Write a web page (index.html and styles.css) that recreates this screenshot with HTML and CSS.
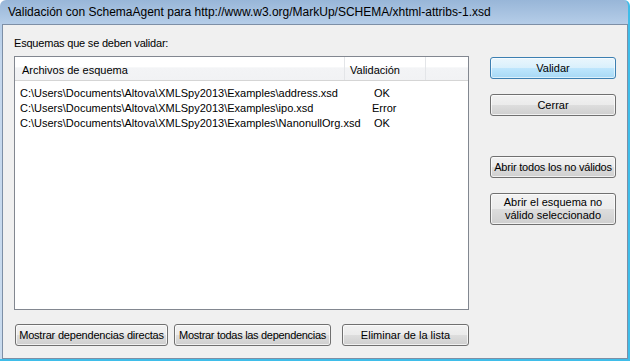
FILE: index.html
```html
<!DOCTYPE html>
<html lang="es">
<head>
    <meta charset="UTF-8">
    <title>Validación con SchemaAgent</title>
    <link rel="stylesheet" href="styles.css">
</head>
<body>
    <div class="window">
        <div class="titlebar">Validación con SchemaAgent para http://www.w3.org/MarkUp/SCHEMA/xhtml-attribs-1.xsd</div>
        <div class="client">
            <div class="left-col">
                <div class="label">Esquemas que se deben validar:</div>
                <div class="listbox">
                    <div class="list-header">
                        <div class="col col-file">Archivos de esquema</div>
                        <div class="col col-valid">Validación</div>
                        <div class="col col-rest"></div>
                    </div>
                    <div class="list-body">
                        <div class="row">
                            <span class="cell-file">C:\Users\Documents\Altova\XMLSpy2013\Examples\address.xsd</span>
                            <span class="cell-valid ok">OK</span>
                        </div>
                        <div class="row">
                            <span class="cell-file">C:\Users\Documents\Altova\XMLSpy2013\Examples\ipo.xsd</span>
                            <span class="cell-valid">Error</span>
                        </div>
                        <div class="row">
                            <span class="cell-file">C:\Users\Documents\Altova\XMLSpy2013\Examples\NanonullOrg.xsd</span>
                            <span class="cell-valid ok">OK</span>
                        </div>
                    </div>
                </div>
                <div class="bottom-buttons">
                    <button class="btn btn-direct">Mostrar dependencias directas</button>
                    <button class="btn btn-all">Mostrar todas las dependencias</button>
                    <button class="btn btn-remove">Eliminar de la lista</button>
                </div>
            </div>
            <div class="right-col">
                <button class="btn btn-side default">Validar</button>
                <button class="btn btn-side btn-close">Cerrar</button>
                <button class="btn btn-side btn-open-all">Abrir todos los no válidos</button>
                <button class="btn btn-side btn-tall">Abrir el esquema no<br>válido seleccionado</button>
            </div>
        </div>
    </div>
</body>
</html>
```

FILE: styles.css
```css
html, body {
    margin: 0;
    padding: 0;
    background: #ffffff;
}
body {
    font-family: "Liberation Sans", Arial, sans-serif;
    font-size: 11px;
    color: #000;
}
.window {
    width: 630px;
    height: 361px;
    box-sizing: border-box;
    display: flex;
    flex-direction: column;
    background: linear-gradient(to bottom, #98b6d8 0px, #b5cde8 24px, #c4d7ed 60px, #c9dbee 100%);
    border-radius: 6px 6px 0 0;
    border-right: 2px solid #3fbde9;
    border-bottom: 2px solid #3fbde9;
}
.titlebar {
    height: 24px;
    line-height: 24px;
    padding-left: 8px;
    font-size: 12px;
    color: #000;
    white-space: nowrap;
    overflow: hidden;
}
.client {
    flex: 1;
    margin: 0 0 0 2px;
    border: 1px solid #7d8fa6;
    background: #f0f0f0;
    display: flex;
    padding: 11px 10px 10px 11px;
}
.left-col {
    width: 455px;
    display: flex;
    flex-direction: column;
}
.label {
    height: 14px;
    line-height: 14px;
    margin-bottom: 6px;
    letter-spacing: -0.2px;
}
.listbox {
    height: 254px;
    box-sizing: border-box;
    border: 1px solid #828790;
    background: #fff;
}
.list-header {
    display: flex;
    height: 23px;
    border-bottom: 1px solid #d5d5d5;
    background: linear-gradient(to bottom, #ffffff 0%, #ffffff 45%, #f3f4f6 46%, #f1f2f4 100%);
}
.col {
    line-height: 26px;
    box-sizing: border-box;
}
.col-file {
    width: 330px;
    padding-left: 7px;
    border-right: 1px solid #e3e5e8;
}
.col-valid {
    width: 81px;
    padding-left: 5px;
    border-right: 1px solid #e3e5e8;
}
.col-rest {
    flex: 1;
}
.list-body {
    padding-top: 5px;
}
.row {
    display: flex;
    height: 15px;
    line-height: 15px;
}
.cell-file {
    width: 330px;
    padding-left: 5px;
    box-sizing: border-box;
    white-space: nowrap;
}
.cell-valid {
    padding-left: 27px;
}
.cell-valid.ok {
    padding-left: 29px;
}
.bottom-buttons {
    display: flex;
    margin-top: 14px;
    padding-left: 1px;
}
.btn {
    font-family: "Liberation Sans", Arial, sans-serif;
    font-size: 11px;
    color: #000;
    height: 22px;
    padding: 0;
    box-sizing: border-box;
    white-space: nowrap;
    border: 1px solid #707070;
    border-radius: 3px;
    background: linear-gradient(to bottom, #f2f2f2 0%, #ebebeb 50%, #dddddd 51%, #cfcfcf 100%);
    box-shadow: inset 0 0 0 1px rgba(255, 255, 255, 0.7);
    line-height: 14px;
}
.btn-direct {
    width: 153px;
    letter-spacing: -0.2px;
}
.btn-all {
    width: 157px;
    margin-left: 6px;
    letter-spacing: -0.3px;
}
.btn-remove {
    width: 127px;
    margin-left: 11px;
}
.right-col {
    display: flex;
    flex-direction: column;
    margin-left: 21px;
    padding-top: 21px;
}
.btn-side {
    width: 126px;
}
.btn.default {
    border-color: #3c7fb1;
    background: linear-gradient(to bottom, #eaf6fd 0%, #d9f0fc 50%, #bee6fd 51%, #a7d9f5 100%);
    box-shadow: inset 0 0 0 1px rgba(255, 255, 255, 0.6);
}
.btn-close {
    margin-top: 15px;
}
.btn-open-all {
    margin-top: 40px;
    letter-spacing: -0.2px;
}
.btn-tall {
    margin-top: 15px;
    height: 32px;
    line-height: 13px;
}
```
